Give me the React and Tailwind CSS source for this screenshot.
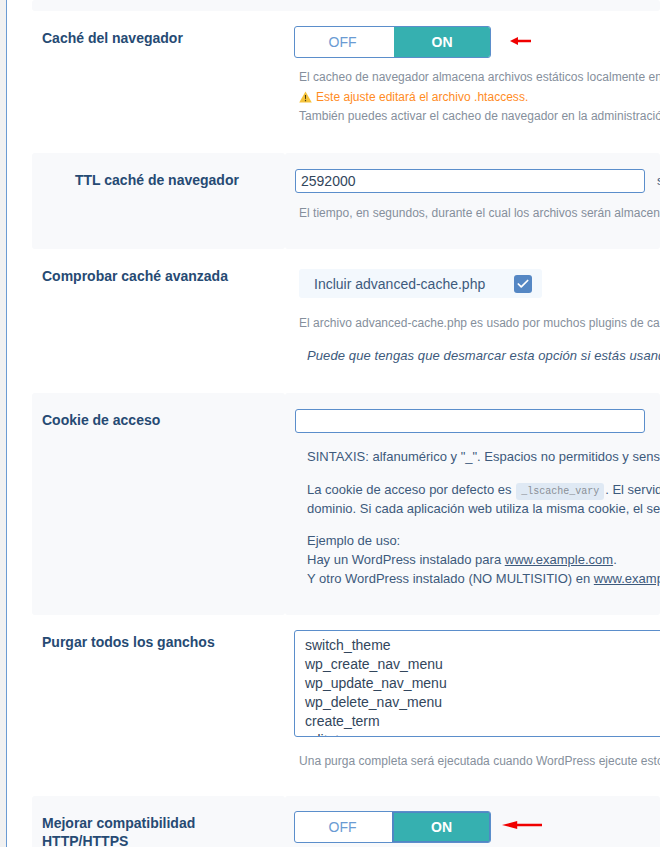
import { Check } from "lucide-react";

function Toggle({ thick }) {
  return (
    <div className="flex h-8 w-[197px] overflow-hidden rounded-[3px] border border-[#5b8ecb] bg-white">
      <div className={`flex ${thick ? "w-[97px] pr-[2px]" : "w-[99px] pr-[4px]"} items-center justify-center text-[14px] text-[#6a9bd3]`}>
        OFF
      </div>
      <div
        className={`flex flex-1 items-center justify-center bg-[#36b0b0] text-[14px] font-bold text-white ${
          thick ? "border-y border-r border-l-2 border-[#5087c4]" : ""
        }`}
      >
        ON
      </div>
    </div>
  );
}

function Arrow({ width, lift }) {
  return (
    <svg width={width} height="10" viewBox={`0 0 ${width} 10`} className={`shrink-0 ${lift}`}>
      <path d={`M0 5 L${width * 0.38} 1 L${width * 0.38} 3.8 L${width} 3.8 L${width} 6.2 L${width * 0.38} 6.2 L${width * 0.38} 9 Z`} fill="#f00000" />
    </svg>
  );
}

function Row({ label, indent, alt, pt, height, children }) {
  const bg = alt ? "bg-[#f8f9fb]" : "bg-white";
  return (
    <div className="flex shrink-0" style={{ height }}>
      <div className={`w-[253px] shrink-0 rounded-[3px] ${bg} ${indent ? "pl-[43px]" : "pl-[10px]"}`}>
        <div className="pt-[18px] text-[14px] leading-[18px] font-bold text-[#264a73]">{label}</div>
      </div>
      <div className={`min-w-0 flex-1 rounded-[3px] ${bg} pl-[9px] whitespace-nowrap`} style={{ paddingTop: pt }}>
        {children}
      </div>
    </div>
  );
}

const desc = "text-[12px] leading-[19.5px] tracking-[0.02px] text-[#858f9c]";
const body = "text-[13px] leading-[19px] text-[#3d5a7c]";

export default function App() {
  return (
    <div className="flex h-[847px] w-[660px] overflow-hidden bg-[#f1f1f1] font-['Liberation_Sans',Arial,sans-serif]">
      <div className="ml-[6px] flex h-full flex-1 flex-col overflow-hidden border-l border-[#6b9bd3] bg-white pl-[25px]">
        <div className="h-[11px] shrink-0 rounded-[3px] bg-[#f8f9fb]" />

        <Row label="Caché del navegador" pt={15} height={142}>
          <div className="flex items-center gap-[19px]">
            <Toggle />
            <Arrow width={21} lift="-mt-[2px]" />
          </div>
          <div className={`mt-[10px] pl-[5px] ${desc}`}>
            <div>El cacheo de navegador almacena archivos estáticos localmente en el navegador del usuario.</div>
            <div className="flex items-center gap-[4px] text-[#ff8c1f]">
              <svg width="13" height="12" viewBox="0 0 13 12">
                <path d="M6.5.5 12.8 11.5H.2Z" fill="#f5c33b" />
                <path d="M5.9 4h1.2l-.2 4.2h-.8ZM5.9 9h1.2v1.2H5.9Z" fill="#4a3b10" />
              </svg>
              Este ajuste editará el archivo .htaccess.
            </div>
            <div>También puedes activar el cacheo de navegador en la administración del servidor.</div>
          </div>
        </Row>

        <Row label="TTL caché de navegador" indent alt pt={16} height={96}>
          <div className="flex items-center gap-[12px]">
            <div className="ml-px flex h-6 w-[350px] shrink-0 items-center rounded-[3px] border border-[#5b8ecb] bg-white pl-[5px] text-[14px] text-[#32465c]">
              2592000
            </div>
            <span className="text-[13px] text-[#3d5a7c]">segundos</span>
          </div>
          <div className={`mt-[11px] pl-[5px] ${desc}`}>
            El tiempo, en segundos, durante el cual los archivos serán almacenados en la caché del navegador.
          </div>
        </Row>

        <Row label="Comprobar caché avanzada" pt={20} height={144}>
          <div className="ml-[5px] flex h-[29px] w-[243px] items-center justify-between rounded-[3px] bg-[#f3f8fd] pt-px pr-[10px] pl-[15px] text-[14px] text-[#3d5a7c]">
            Incluir advanced-cache.php
            <span className="-mt-px flex h-[18px] w-[18px] items-center justify-center rounded-[3px] bg-[#5587c4]">
              <Check size={14} strokeWidth={3} className="text-white" />
            </span>
          </div>
          <div className={`mt-[16px] pl-[5px] ${desc}`}>
            El archivo advanced-cache.php es usado por muchos plugins de caché.
          </div>
          <div className="mt-[12px] pl-[13px] text-[13px] leading-[19px] tracking-[0.1px] text-[#3d5a7c] italic">
            Puede que tengas que desmarcar esta opción si estás usando otro plugin de caché.
          </div>
        </Row>

        <Row label="Cookie de acceso" alt pt={16} height={222}>
          <div className="ml-px h-6 w-[350px] rounded-[3px] border border-[#5b8ecb] bg-white" />
          <div className={`mt-[14px] ml-[13px] ${body}`}>
            SINTAXIS: alfanumérico y "_". Espacios no permitidos y sensible a mayúsculas.
          </div>
          <div className={`mt-[14px] ml-[13px] ${body}`}>
            <div>
              La cookie de acceso por defecto es{" "}
              <code className="mx-[1px] rounded-[3px] bg-[#dfe9f4] px-[5px] py-[3px] font-['Liberation_Mono',monospace] text-[10px] leading-none text-[#8a8f96]">
                _lscache_vary
              </code>
              . El servidor web la establece en un dominio.
            </div>
            <div>dominio. Si cada aplicación web utiliza la misma cookie, el servidor puede confundirse.</div>
          </div>
          <div className={`mt-[13px] ml-[13px] ${body}`}>
            <div>Ejemplo de uso:</div>
            <div>
              Hay un WordPress instalado para <span className="underline">www.example.com</span>.
            </div>
            <div>
              Y otro WordPress instalado (NO MULTISITIO) en <span className="underline">www.example.com/blog</span>
            </div>
          </div>
        </Row>

        <Row label="Purgar todos los ganchos" pt={15} height={181}>
          <textarea
            readOnly
            rows={5}
            className="block h-[107px] w-[500px] resize-none overflow-hidden rounded-[3px] border border-[#5b8ecb] bg-white pt-[5px] pl-[10px] text-[14px] leading-[19px] text-[#32465c] outline-none"
            value={"switch_theme\nwp_create_nav_menu\nwp_update_nav_menu\nwp_delete_nav_menu\ncreate_term\nedit_terms\ndelete_term"}
          />
          <div className={`mt-[15px] pl-[5px] ${desc}`}>
            Una purga completa será ejecutada cuando WordPress ejecute estos ganchos.
          </div>
        </Row>

        <Row label={<>Mejorar compatibilidad<br />HTTP/HTTPS</>} alt pt={15} height={60}>
          <div className="flex items-center gap-[11px]">
            <Toggle thick />
            <Arrow width={40} lift="-mt-[4px]" />
          </div>
        </Row>
      </div>
    </div>
  );
}
